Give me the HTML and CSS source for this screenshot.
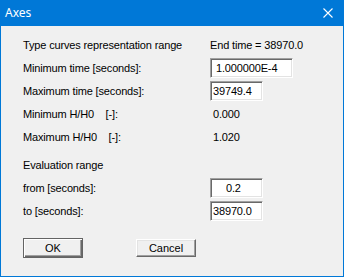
FILE: index.html
```html
<!DOCTYPE html>
<html>
<head>
	<title>Axes</title>
	<meta charset="utf-8">
	<link rel="stylesheet" href="styles.css">
</head>
<body>
	<div class="dialog">
		<div class="titlebar">
			<span class="title">Axes</span>
			<svg class="close" width="10" height="10" viewBox="0 0 10 10">
				<path d="M0.5 0.5L9.5 9.5M9.5 0.5L0.5 9.5" stroke="#fff" stroke-width="1.1" fill="none"/>
			</svg>
		</div>
		<div class="content">
			<!--曲线范围-->
			<div class="grid">
				<div class="label">Type curves representation range</div>
				<div class="value">End time = 38970.0</div>

				<div class="label">Minimum time [seconds]:</div>
				<div class="value"><input class="field wide pad5" type="text" value="1.000000E-4"></div>

				<div class="label">Maximum time [seconds]:</div>
				<div class="value"><input class="field" type="text" value="39749.4"></div>

				<div class="label">Minimum H/H0&nbsp;&nbsp;&nbsp;&nbsp;[-]:</div>
				<div class="value num">0.000</div>

				<div class="label">Maximum H/H0&nbsp;&nbsp;&nbsp;&nbsp;[-]:</div>
				<div class="value num">1.020</div>
			</div>
			<!--计算范围-->
			<div class="grid second">
				<div class="label full">Evaluation range</div>

				<div class="label">from [seconds]:</div>
				<div class="value"><input class="field pad15" type="text" value="0.2"></div>

				<div class="label">to [seconds]:</div>
				<div class="value"><input class="field" type="text" value="38970.0"></div>
			</div>
			<div class="buttons">
				<button class="btn default">OK</button>
				<button class="btn">Cancel</button>
			</div>
		</div>
	</div>
</body>
</html>
```

FILE: styles.css
```css
*{
	margin:0;
	padding:0;
	box-sizing:border-box;
}
body{
	background:#fff;
	font-family:"Liberation Sans",Arial,sans-serif;
	font-size:11px;
	color:#000;
}
.dialog{
	width:344px;
	height:277px;
	background:#f0f0f0;
	border:1px solid #0078d7;
	border-top:none;
}
.titlebar{
	height:26px;
	margin:0 -1px;
	background:#0078d7;
	display:flex;
	align-items:center;
	justify-content:space-between;
	padding:0 11px 0 5px;
}
.title{
	font-family:"Noto Sans","Open Sans",sans-serif;
	font-size:12px;
	color:#fff;
	line-height:16px;
}
.close{
	display:block;
}
.content{
	padding:8px 0 0 22px;
}
.grid{
	display:grid;
	grid-template-columns:187px 1fr;
	grid-auto-rows:22px;
	row-gap:1px;
	align-items:center;
	letter-spacing:-0.15px;
}
.grid.second{
	margin-top:6px;
}
.label.full{
	grid-column:1 / 3;
}
.value{
	display:flex;
	align-items:center;
}
.value.num{
	padding-left:3px;
}
.field{
	width:53px;
	height:20px;
	font-family:"Liberation Sans",Arial,sans-serif;
	font-size:11px;
	letter-spacing:-0.15px;
	color:#000;
	background:#fff;
	padding:0 0 0 2px;
	border:1px solid;
	border-color:#a0a0a0 #fff #fff #a0a0a0;
	box-shadow:inset 1px 1px #696969,inset -1px -1px #e3e3e3;
	outline:none;
}
.field.wide{
	width:83px;
}
.field.pad5{
	padding-left:5px;
}
.field.pad15{
	padding-left:15px;
}
.buttons{
	display:flex;
	gap:53px;
	margin-top:16px;
}
.btn{
	width:60px;
	height:20px;
	font-family:"Liberation Sans",Arial,sans-serif;
	font-size:11px;
	color:#000;
	background:#f0f0f0;
	border:1px solid;
	border-color:#fff #696969 #696969 #fff;
	box-shadow:inset -1px -1px #a0a0a0,inset 1px 1px #e3e3e3;
}
.btn.default{
	border:1px solid #646464;
	box-shadow:inset 1px 1px #fff,inset -1px -1px #696969,inset -2px -2px #a0a0a0;
}
.btn + .btn{
	margin-top:1px;
	height:18px;
}
```
